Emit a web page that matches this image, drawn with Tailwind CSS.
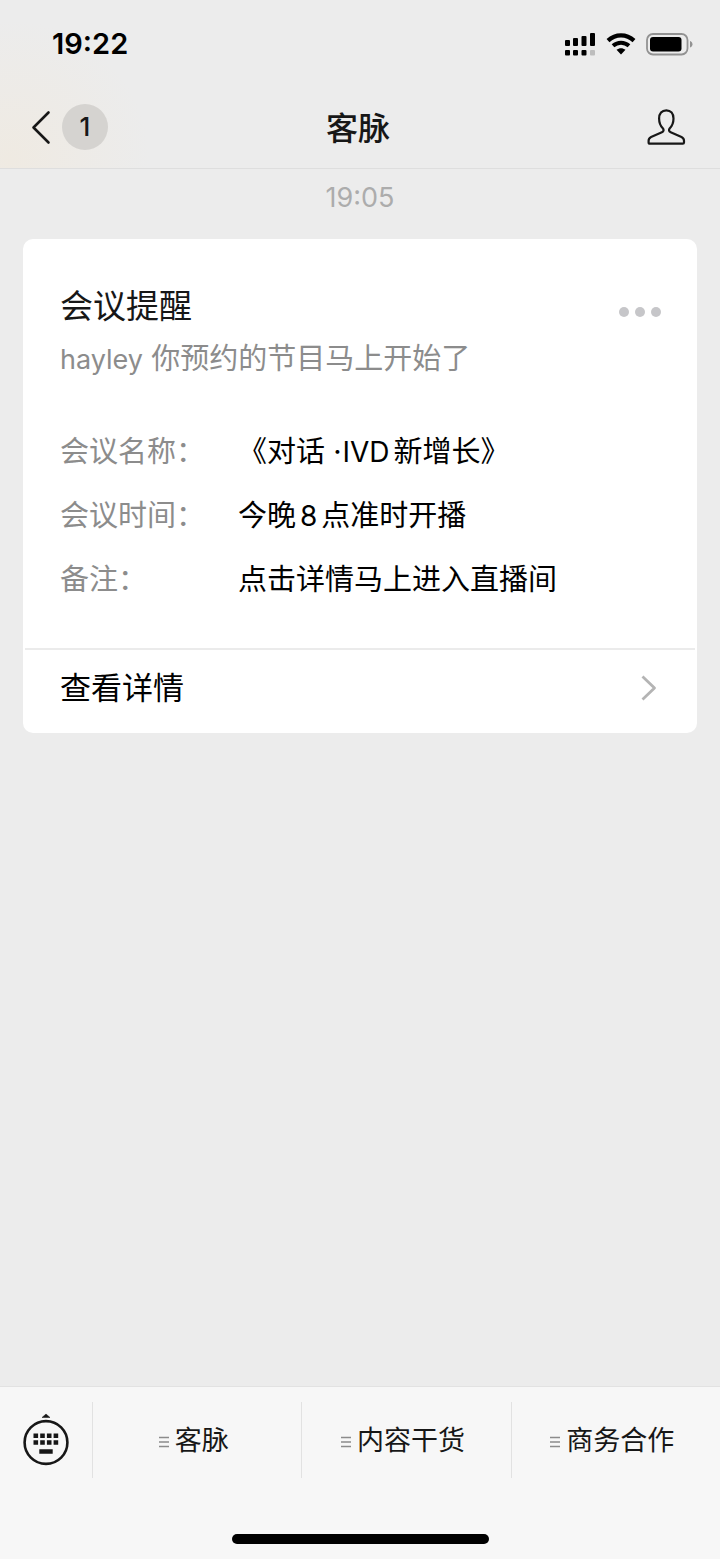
<!DOCTYPE html>
<html lang="zh-CN">
<head>
    <meta charset="UTF-8">
    <meta name="viewport" content="width=device-width, initial-scale=1">
    <title>客脉</title>
    <script src="https://cdn.jsdelivr.net/npm/@tailwindcss/browser@4"></script>
</head>
<body class="min-h-screen flex flex-col bg-[#ececec] text-[#171717] font-['Inter','Noto_Sans_CJK_SC',sans-serif]">
    <header class="border-b border-[#dedede] bg-[radial-gradient(circle_at_10px_160px,#efeae2,#ececec_140px)]">
        <!-- Status bar -->
        <div class="h-[88px] pl-[52px] pr-[27px] flex items-center justify-between text-black">
            <span class="text-[29px] leading-8 font-semibold">19:22</span>
            <div class="flex items-center gap-[10px]">
                <svg class="w-8 h-6" viewBox="0 0 32 24" fill="currentColor" aria-label="信号">
                    <rect x="1" y="8" width="5" height="6" rx="1"/>
                    <rect x="9" y="6" width="5" height="8" rx="1"/>
                    <rect x="17.500" y="4" width="5" height="10" rx="1"/>
                    <rect x="26" y="1" width="5" height="13" rx="1"/>
                    <rect x="1" y="18" width="5" height="5.500" rx="1"/>
                    <rect x="9" y="18" width="5" height="5.500" rx="1"/>
                    <rect x="17.500" y="18" width="5" height="5.500" rx="1"/>
                    <rect x="26" y="18" width="5" height="5.500" rx="1" fill="#bdbdbd"/>
                </svg>
                <svg class="w-[30px] h-6" viewBox="0 0 30 24" aria-label="Wi-Fi">
                    <path d="M2 8.600C9.500 1.600 20.500 1.600 28 8.600" fill="none" stroke="currentColor" stroke-width="4.200"/>
                    <path d="M7 13.800C11.700 9.700 18.300 9.700 23 13.800" fill="none" stroke="currentColor" stroke-width="4"/>
                    <path d="M10.500 17.800C13.200 15.700 16.800 15.700 19.500 17.800L15 22.500Z" fill="currentColor"/>
                </svg>
                <svg class="w-[47px] h-6" viewBox="0 0 47 24" aria-label="电量">
                    <rect x="1" y="2" width="40.500" height="20.500" rx="6" fill="none" stroke="#929292" stroke-width="1.800"/>
                    <rect x="4" y="5" width="31.500" height="14.500" rx="3" fill="currentColor"/>
                    <path d="M44 9C47.300 10.200 47.300 14.300 44 15.500Z" fill="#929292"/>
                </svg>
            </div>
        </div>
        <!-- Nav bar -->
        <div class="h-20 pb-[3px] pl-[30px] pr-[34px] grid grid-cols-[1fr_auto_1fr] items-center">
            <a href="#" class="flex items-center gap-[10px]" aria-label="返回">
                <svg class="w-[22px] h-9" viewBox="0 0 22 36" fill="none" stroke="currentColor" stroke-width="2.600" stroke-linecap="round" stroke-linejoin="round"><path d="M18.500 3.500L3.500 18.500L18.500 33.500"/></svg>
                <span class="size-[46px] rounded-full bg-[#d5d3d0] flex items-center justify-center text-[26px] font-medium">1</span>
            </a>
            <h1 class="pt-1 text-[32px] leading-10 font-medium">客脉</h1>
            <button type="button" class="justify-self-end" aria-label="公众号资料">
                <svg class="w-10 h-9" viewBox="0 0 40 36" fill="none" stroke="currentColor" stroke-width="2.200" stroke-linejoin="round"><path d="M20.300 1.300C24.800 1.300 27.500 4.600 27.500 9.500C27.500 14.200 25.900 17.100 23.800 19.300C22.500 20.800 22.800 22.500 24.700 23.300L35.500 28C37.300 28.900 38 30 38 31.800V33.500Q38 34.700 36.800 34.700H3.800Q2.600 34.700 2.600 33.500V31.800C2.600 30 3.300 28.900 5.100 28L15.900 23.300C17.800 22.500 18.100 20.800 16.800 19.300C14.700 17.100 13.100 14.200 13.100 9.500C13.100 4.600 15.800 1.300 20.300 1.300Z"/></svg>
            </button>
        </div>
    </header>

    <main class="flex-1 px-[23px] pt-3">
        <time class="block text-center text-[27px] leading-[34px] text-[#acacac]">19:05</time>

        <article class="mt-6 rounded-[10px] bg-white">
            <div class="pt-11 px-9 pb-[46px]">
                <div class="pl-px flex items-center justify-between">
                    <h2 class="text-[33px] leading-[46px]">会议提醒</h2>
                    <button type="button" class="flex gap-[6px] pt-3" aria-label="更多">
                        <span class="size-[10px] rounded-full bg-[#c6c6c9]"></span>
                        <span class="size-[10px] rounded-full bg-[#c6c6c9]"></span>
                        <span class="size-[10px] rounded-full bg-[#c6c6c9]"></span>
                    </button>
                </div>
                <p class="mt-2 pl-px text-[29px] leading-[44px] text-[#8c8c8c]"><span class="text-[27px] leading-none">hayley</span> 你预约的节目马上开始了</p>

                <dl class="mt-[49px] pl-px grid grid-cols-[178px_1fr] gap-y-5 text-[29px] leading-[44px]">
                    <dt class="text-[#8c8c8c]">会议名称：</dt>
                    <dd class="text-black">《对话 ·<span class="text-[28px] leading-none ml-px mr-1">IVD</span>新增长》</dd>
                    <dt class="text-[#8c8c8c]">会议时间：</dt>
                    <dd class="text-black">今晚<span class="text-[28px] leading-none mx-1">8</span>点准时开播</dd>
                    <dt class="text-[#8c8c8c]">备注：</dt>
                    <dd class="text-black">点击详情马上进入直播间</dd>
                </dl>
            </div>
            <a href="#" class="mx-[2px] border-t-2 border-[#ebebeb] h-[85px] pl-[35px] pr-[37px] pb-2 flex items-center justify-between text-black">
                <span class="text-[31px] leading-10">查看详情</span>
                <svg class="w-[18px] h-7" viewBox="0 0 18 28" fill="none" stroke="#b4b4b4" stroke-width="2.800" stroke-linejoin="round"><path d="M2.500 2.500L14.500 14L2.500 25.500"/></svg>
            </a>
        </article>
    </main>

    <footer class="bg-[#f7f7f7] border-t border-[#e2e2e2] pt-[15px] pb-[15px]">
        <nav class="h-[76px] flex divide-x divide-[#e2e2e2] text-[27px]">
            <button type="button" class="w-[93px] shrink-0 flex items-center justify-center" aria-label="切换键盘">
                <svg class="w-12 h-[54px]" viewBox="0 0 48 54" fill="currentColor">
                    <path d="M20 4.500L24 1L28 4.500Z" stroke="currentColor" stroke-width=".5"/>
                    <circle cx="24" cy="29.500" r="21.400" fill="none" stroke="currentColor" stroke-width="2.600"/>
                    <path d="M11.500 20.500h4.600v4.600h-4.600zM18.200 20.500h4.600v4.600h-4.600zM24.900 20.500h4.600v4.600h-4.600zM31.600 20.500h4.600v4.600h-4.600zM11.500 27.200h4.600v4.600h-4.600zM18.200 27.200h4.600v4.600h-4.600zM24.900 27.200h4.600v4.600h-4.600zM31.600 27.200h4.600v4.600h-4.600zM17.300 36.300h13.400v4.500h-13.400z"/>
                </svg>
            </button>
            <button type="button" class="flex-1 pt-[3px] pr-[7px] flex items-center justify-center gap-[6px]">
                <svg class="w-[10px] h-3" viewBox="0 0 10 12" stroke="#8c8c8c" stroke-width="1.300"><path d="M0 1.500H10M0 6H10M0 10.500H10"/></svg>
                客脉
            </button>
            <button type="button" class="flex-1 pt-[3px] pr-[7px] flex items-center justify-center gap-[6px]">
                <svg class="w-[10px] h-3" viewBox="0 0 10 12" stroke="#8c8c8c" stroke-width="1.300"><path d="M0 1.500H10M0 6H10M0 10.500H10"/></svg>
                内容干货
            </button>
            <button type="button" class="flex-1 pt-[3px] pr-[7px] flex items-center justify-center gap-[6px]">
                <svg class="w-[10px] h-3" viewBox="0 0 10 12" stroke="#8c8c8c" stroke-width="1.300"><path d="M0 1.500H10M0 6H10M0 10.500H10"/></svg>
                商务合作
            </button>
        </nav>
        <div class="mt-14 mx-auto w-[257px] h-[10px] rounded-full bg-black"></div>
    </footer>
</body>
</html>
